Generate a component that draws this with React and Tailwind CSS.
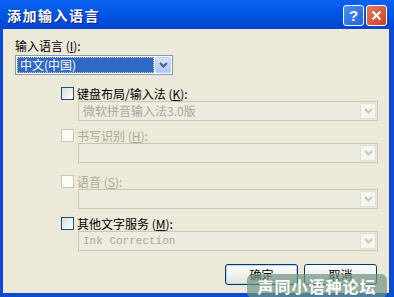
import React from "react";

const font = { fontFamily: '"Noto Sans CJK SC", "Noto Sans", sans-serif' };

function Chevron({ color }) {
  return (
    <svg width="9" height="6" viewBox="0 0 9 6">
      <path d="M1 1 L4.5 4.5 L8 1" fill="none" stroke={color} strokeWidth="2" />
    </svg>
  );
}

function Checkbox({ label, disabled }) {
  return (
    <div className="flex items-center h-[13px] ml-[46px]">
      <div
        className={
          disabled
            ? "w-[13px] h-[13px] border border-[#cac8bb] bg-[#fbfbf8]"
            : "w-[13px] h-[13px] border border-[#1c5180] bg-gradient-to-br from-[#dcdcd7] to-[#ffffff]"
        }
      />
      <span
        className={
          "ml-[3px] text-[12px] leading-[14px] whitespace-nowrap " +
          (disabled ? "text-[#aca899]" : "text-black")
        }
      >
        {label}
      </span>
    </div>
  );
}

function DisabledCombo({ text, mono }) {
  return (
    <div className="ml-[63px] mt-[1px] w-[300px] h-[20px] border border-[#c9c7ba] bg-[#edebe0] flex items-center justify-between">
      <span
        className="pl-[4px] text-[12px] leading-[14px] text-[#aca899] whitespace-nowrap"
        style={mono ? { fontFamily: '"Liberation Mono", monospace', fontSize: "11px" } : undefined}
      >
        {text}
      </span>
      <div className="w-[16px] h-[16px] mr-[1px] bg-[#f4f4f0] border border-[#e2e0d6] flex items-center justify-center">
        <Chevron color="#c9c7ba" />
      </div>
    </div>
  );
}

export default function App() {
  return (
    <div className="w-[394px] h-[297px] flex flex-col bg-[#0a4bd6]" style={font}>
      {/* title bar */}
      <div className="h-[29px] flex items-center justify-between bg-gradient-to-b from-[#0a62f0] via-[#0054e3] to-[#0044cf] pl-[7px] pr-[7px]">
        <span
          className="text-white font-bold text-[14px] tracking-[1.5px] leading-[16px]"
          style={{ textShadow: "1px 1px 0 #0a1e80" }}
        >
          添加输入语言
        </span>
        <div className="flex gap-[2px] mt-[2px]">
          <div className="w-[21px] h-[21px] rounded-[3px] border border-white bg-gradient-to-br from-[#4d8ff8] to-[#1f5fe0] flex items-center justify-center text-white font-bold text-[15px] leading-none" style={{ fontFamily: '"Liberation Sans", sans-serif' }}>
            ?
          </div>
          <div className="w-[21px] h-[21px] rounded-[3px] border border-white bg-gradient-to-br from-[#e8795a] to-[#c8401d] flex items-center justify-center">
            <svg width="11" height="11" viewBox="0 0 11 11">
              <path d="M1.5 1.5 L9.5 9.5 M9.5 1.5 L1.5 9.5" stroke="white" strokeWidth="2.2" />
            </svg>
          </div>
        </div>
      </div>
      {/* body */}
      <div className="flex-1 flex ml-[3px] mr-[5px] mb-[4px] bg-[#ece9d8]">
        <div className="relative flex-1 flex flex-col pt-[9px] pl-[12px]">
          <div className="text-[12px] leading-[15px] text-black">
            输入语言 (<u>I</u>):
          </div>
          <div className="mt-[2px] w-[158px] h-[20px] border border-[#7f9db9] bg-white flex items-center p-[1px]">
            <div className="flex-1 h-full bg-[#316ac5] border border-dotted border-[#f0c090] flex items-center">
              <span className="pl-[2px] text-white text-[12px] leading-[14px]">中文(中国)</span>
            </div>
            <div className="ml-[1px] w-[16px] h-full rounded-[2px] border border-[#b9cef9] bg-gradient-to-b from-[#d5e2fd] to-[#b2c7f7] flex items-center justify-center">
              <Chevron color="#4d6185" />
            </div>
          </div>

          <div className="mt-[12px]">
            <Checkbox label={<>键盘布局/输入法 (<u>K</u>):</>} />
          </div>
          <DisabledCombo text="微软拼音输入法3.0版" />

          <div className="mt-[8px]">
            <Checkbox disabled label={<>书写识别 (<u>H</u>):</>} />
          </div>
          <DisabledCombo text="" />

          <div className="mt-[12px]">
            <Checkbox disabled label={<>语音 (<u>S</u>):</>} />
          </div>
          <DisabledCombo text="" />

          <div className="mt-[8px]">
            <Checkbox label={<>其他文字服务 (<u>M</u>):</>} />
          </div>
          <DisabledCombo text="Ink Correction" mono />

          <div className="mt-[13px] flex gap-[6px] ml-[210px]">
            <div className="w-[73px] h-[21px] rounded-[3px] border border-[#003c74] bg-gradient-to-b from-white to-[#e3e3db] flex items-center justify-center shadow-[inset_0_0_0_1px_#bcd4f6]">
              <span className="text-[12px] leading-[14px] text-black">确定</span>
            </div>
            <div className="w-[73px] h-[21px] rounded-[3px] border border-[#003c74] bg-gradient-to-b from-white to-[#e3e3db] flex items-center justify-center">
              <span className="text-[12px] leading-[14px] text-black">取消</span>
            </div>
          </div>

          {/* watermark */}
          <div className="absolute left-[244px] top-[245px] w-[140px] h-[24px] rounded-[6px] bg-[#6f9480]/70 flex items-center justify-center">
            <span className="text-white font-bold text-[16px] tracking-[1px] leading-none">声同小语种论坛</span>
          </div>
        </div>
      </div>
    </div>
  );
}
